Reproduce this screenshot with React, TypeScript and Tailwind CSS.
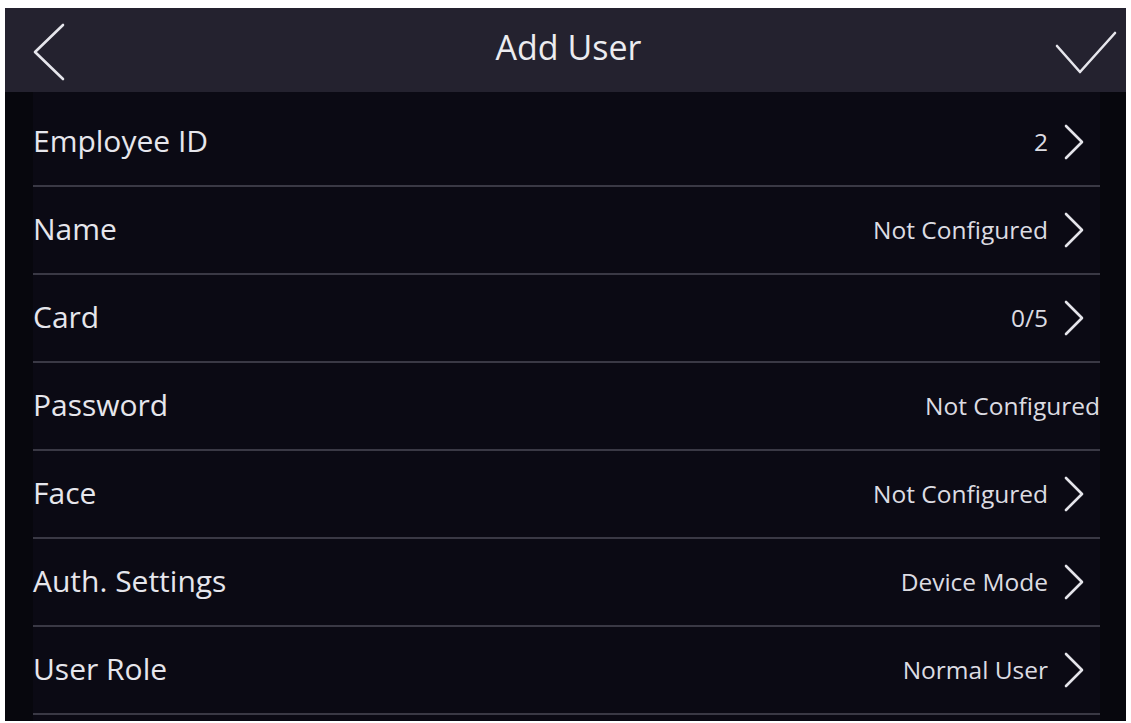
import React from "react";

const rows: { label: string; value: string; chevron: boolean }[] = [
  { label: "Employee ID", value: "2", chevron: true },
  { label: "Name", value: "Not Configured", chevron: true },
  { label: "Card", value: "0/5", chevron: true },
  { label: "Password", value: "Not Configured", chevron: false },
  { label: "Face", value: "Not Configured", chevron: true },
  { label: "Auth. Settings", value: "Device Mode", chevron: true },
  { label: "User Role", value: "Normal User", chevron: true },
];

function Chevron() {
  return (
    <svg width="22" height="36" viewBox="0 0 22 36" className="ml-[15px] shrink-0">
      <polyline points="3,2 19,18 3,34" fill="none" stroke="#e4e4ea" strokeWidth="2.6" strokeLinecap="round" strokeLinejoin="round" />
    </svg>
  );
}

export default function App() {
  return (
    <div className="w-[1131px] h-[723px] bg-white pt-[8px] pl-[5px]" style={{ fontFamily: '"Open Sans", "Noto Sans", sans-serif' }}>
      <div className="w-[1121px] h-[713px] bg-[#07070d] flex flex-col">
        <div className="h-[84px] bg-[#24222f] relative flex items-center justify-center shrink-0">
          <svg width="34" height="60" viewBox="0 0 34 60" className="absolute left-[27px] top-[14px]">
            <polyline points="31,3 3,30 31,57" fill="none" stroke="#e6e6ec" strokeWidth="2.6" strokeLinecap="round" strokeLinejoin="round" />
          </svg>
          <span className="text-[34px] text-[#ececf0] leading-none -mt-[6px] ml-[6px]">Add User</span>
          <svg width="64" height="46" viewBox="0 0 64 46" className="absolute left-[1049px] top-[22px]">
            <polyline points="3,16 26,42 61,3" fill="none" stroke="#e6e6ec" strokeWidth="2.6" strokeLinecap="round" strokeLinejoin="round" />
          </svg>
        </div>
        <div className="flex-1 bg-[#0b0a14] ml-[28px] mr-[26px] pt-[7px]">
          {rows.map((r) => (
            <div key={r.label} className="h-[88px] border-b-2 border-[#3a3945] flex items-center justify-between">
              <span className="text-[30px] text-[#e6e6ec] leading-none -mt-[2px]">{r.label}</span>
              <div className="flex items-center">
                <span className="text-[24.5px] text-[#dcdce2] leading-none">{r.value}</span>
                {r.chevron ? <Chevron /> : null}
                {r.chevron ? <div className="w-[15px]" /> : null}
              </div>
            </div>
          ))}
        </div>
      </div>
    </div>
  );
}
